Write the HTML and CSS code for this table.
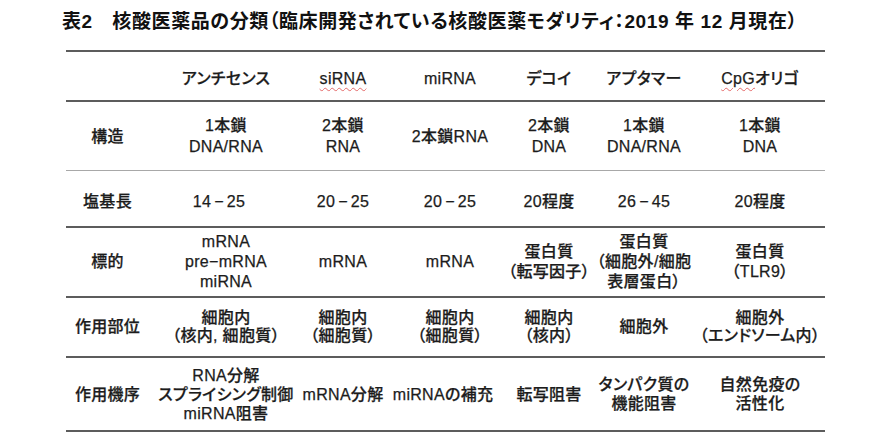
FILE: index.html
```html
<!DOCTYPE html>
<html lang="ja">
<head>
<meta charset="utf-8">
<title>表2 核酸医薬品の分類</title>
<link rel="stylesheet" href="styles.css">
</head>
<body>
<main class="sheet">
  <h1 class="title">表2　核酸医薬品の分類（臨床開発されている核酸医薬モダリティ：2019 年 12 月現在）</h1>
  <div class="table">
    <div class="row row-head">
      <div class="cell"></div>
      <div class="cell"><span>アンチセンス</span></div>
      <div class="cell"><span class="spell">siRNA</span></div>
      <div class="cell"><span>miRNA</span></div>
      <div class="cell"><span>デコイ</span></div>
      <div class="cell"><span>アプタマー</span></div>
      <div class="cell last"><span><span class="spell">CpG</span>オリゴ</span></div>
    </div>
    <div class="row row-struct">
      <div class="cell label"><span>構造</span></div>
      <div class="cell"><span>1本鎖</span><span>DNA/RNA</span></div>
      <div class="cell"><span>2本鎖</span><span>RNA</span></div>
      <div class="cell"><span>2本鎖RNA</span></div>
      <div class="cell"><span>2本鎖</span><span>DNA</span></div>
      <div class="cell"><span>1本鎖</span><span>DNA/RNA</span></div>
      <div class="cell last"><span>1本鎖</span><span>DNA</span></div>
    </div>
    <div class="row row-len">
      <div class="cell label"><span>塩基長</span></div>
      <div class="cell"><span class="nudge-l">14<span class="dash">−</span>25</span></div>
      <div class="cell"><span>20<span class="dash">−</span>25</span></div>
      <div class="cell"><span>20<span class="dash">−</span>25</span></div>
      <div class="cell"><span>20程度</span></div>
      <div class="cell"><span>26<span class="dash">−</span>45</span></div>
      <div class="cell last"><span>20程度</span></div>
    </div>
    <div class="row row-target">
      <div class="cell label"><span>標的</span></div>
      <div class="cell"><span>mRNA</span><span>pre−mRNA</span><span>miRNA</span></div>
      <div class="cell"><span>mRNA</span></div>
      <div class="cell"><span>mRNA</span></div>
      <div class="cell"><span>蛋白質</span><span>（転写因子）</span></div>
      <div class="cell"><span>蛋白質</span><span>（細胞外/細胞</span><span>表層蛋白）</span></div>
      <div class="cell last"><span>蛋白質</span><span>（TLR9）</span></div>
    </div>
    <div class="row row-site">
      <div class="cell label"><span>作用部位</span></div>
      <div class="cell"><span>細胞内</span><span>（核内, 細胞質）</span></div>
      <div class="cell"><span>細胞内</span><span>（細胞質）</span></div>
      <div class="cell"><span>細胞内</span><span>（細胞質）</span></div>
      <div class="cell"><span>細胞内</span><span>（核内）</span></div>
      <div class="cell"><span>細胞外</span></div>
      <div class="cell last"><span>細胞外</span><span>（エンドソーム内）</span></div>
    </div>
    <div class="row row-mech">
      <div class="cell label"><span>作用機序</span></div>
      <div class="cell"><span>RNA分解</span><span>スプライシング制御</span><span>miRNA阻害</span></div>
      <div class="cell"><span>mRNA分解</span></div>
      <div class="cell"><span class="nudge-l">miRNAの補充</span></div>
      <div class="cell"><span>転写阻害</span></div>
      <div class="cell"><span>タンパク質の</span><span>機能阻害</span></div>
      <div class="cell last"><span>自然免疫の</span><span>活性化</span></div>
    </div>
  </div>
</main>
</body>
</html>
```
FILE: styles.css
```css
html, body {
  margin: 0;
  background: #ffffff;
}

body {
  color: #1c1c1c;
  font-family: "Liberation Sans", "Noto Sans CJK JP", sans-serif;
  font-feature-settings: "palt";
}

.sheet {
  padding: 10px 0 0 62px;
}

.title {
  margin: 0;
  font-size: 19px;
  font-weight: 700;
  line-height: 24px;
  letter-spacing: 0.6px;
  color: #111111;
  white-space: nowrap;
}

.table {
  margin: 16px 0 0 4px;
  width: 759px;
  border-top: 2px solid #5c5c5c;
  border-bottom: 2px solid #5c5c5c;
}

.row {
  display: grid;
  grid-template-columns: 83px 154px 80px 134px 64px 126px 118px;
  box-sizing: border-box;
  border-bottom: 2px solid #5c5c5c;
  font-size: 16px;
  font-weight: 500;
  line-height: 19px;
  letter-spacing: 0.3px;
  -webkit-text-stroke: 0.25px #1c1c1c;
}

.row:last-child {
  border-bottom: none;
}

.cell {
  display: flex;
  flex-direction: column;
  align-items: center;
  justify-content: center;
  white-space: nowrap;
  text-align: center;
  min-width: 0;
}

.cell.last {
  padding-right: 12px;
}

.row-head {
  height: 50px;
  padding-top: 4px;
}

.row-struct {
  height: 69px;
  line-height: 21px;
  border-bottom: 1px solid #a8a8a8;
}

.row-len {
  height: 57px;
  padding-top: 6px;
}

.row-target {
  height: 70px;
  line-height: 20px;
}

.row-site {
  height: 60px;
  line-height: 18px;
}

.row-mech {
  height: 72px;
  line-height: 19px;
}

.dash {
  display: inline-block;
  margin: 0 3px;
}

.spell {
  text-decoration: underline wavy #e46a6a;
  text-decoration-thickness: 1px;
  text-underline-offset: 3px;
}

.nudge-l {
  margin-right: 14px;
}
```
